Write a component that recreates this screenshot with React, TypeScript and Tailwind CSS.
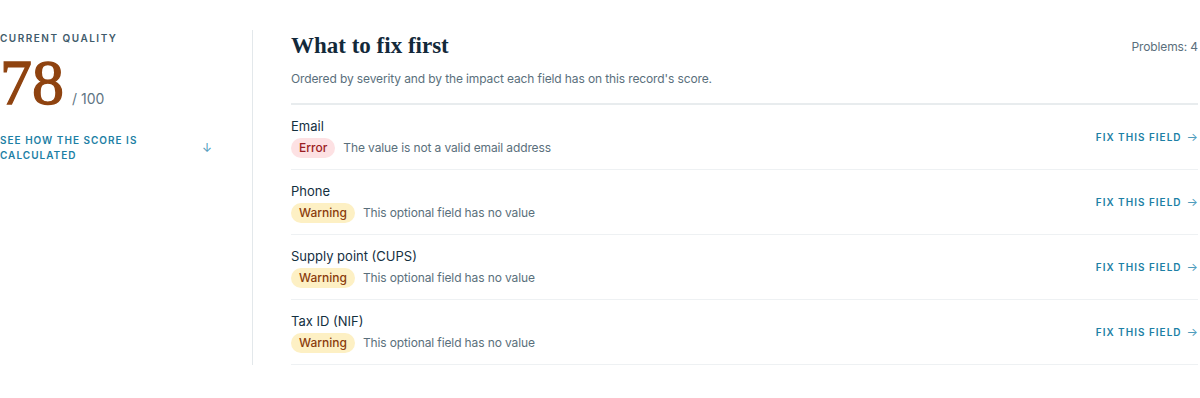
import React from 'react';

interface Problem {
  field: string;
  severity: 'error' | 'warning';
  message: string;
}

const problems: Problem[] = [
  { field: 'Email', severity: 'error', message: 'The value is not a valid email address' },
  { field: 'Phone', severity: 'warning', message: 'This optional field has no value' },
  { field: 'Supply point (CUPS)', severity: 'warning', message: 'This optional field has no value' },
  { field: 'Tax ID (NIF)', severity: 'warning', message: 'This optional field has no value' },
];

const serif = "font-['Liberation_Serif',Georgia,serif]";

export default function App() {
  return (
    <div className="min-h-[398px] bg-white font-['Inter',sans-serif] text-[#14303f]">
      <div className="flex pt-[30px]">
        {/* Score column */}
        <div className="w-[253px] shrink-0 border-r border-[#e3e8eb] pr-10">
          <div className="text-[10px] font-semibold uppercase leading-4 tracking-[0.15em] text-[#3f5b6b]">
            Current quality
          </div>
          <div className="mt-[5px] flex items-baseline">
            <span className={`${serif} text-[64px] leading-none text-[#8f4310] [-webkit-text-stroke:1.3px_#8f4310]`}>78</span>
            <span className="ml-2 text-[14px] text-[#5f7584]">/ 100</span>
          </div>
          <button className="mt-[18px] flex w-full items-center justify-between text-left">
            <span className="max-w-[150px] text-[10px] font-semibold uppercase leading-[15px] tracking-[0.1em] text-[#1d7fa5]">
              See how the score is calculated
            </span>
            <span className="text-[12px] text-[#4d9bbb]">↓</span>
          </button>
        </div>

        {/* Problems list */}
        <div className="flex-1 pl-[38px] pr-[2px]">
          <div className="border-b-2 border-[#e8ecee] pb-[14px]">
            <div className="flex items-center justify-between">
              <h2 className={`${serif} text-[23px] font-bold leading-8 text-[#13293a]`}>What to fix first</h2>
              <span className="pt-[2px] text-[12px] tracking-[-0.01em] text-[#5a6f7c]">Problems: 4</span>
            </div>
            <p className="mt-[7px] text-[12px] leading-5 tracking-[-0.01em] text-[#5a6f7c]">
              Ordered by severity and by the impact each field has on this record's score.
            </p>
          </div>

          {problems.map((p) => (
            <div
              key={p.field}
              className="flex items-center justify-between border-b border-[#eef1f3] pt-[11px] pb-[11px]"
            >
              <div>
                <div className="text-[13px] leading-5 text-[#14303f]">{p.field}</div>
                <div className="mt-0.5 flex items-center gap-2">
                  <span
                    className={
                      p.severity === 'error'
                        ? 'flex h-5 items-center rounded-full bg-[#fde1e3] px-2 text-[12px] font-medium text-[#9b1c22]'
                        : 'flex h-5 items-center rounded-full bg-[#fdf0c4] px-2 text-[12px] font-medium text-[#8a3c0c]'
                    }
                  >
                    {p.severity === 'error' ? 'Error' : 'Warning'}
                  </span>
                  <span className="text-[12px] tracking-[-0.01em] text-[#5a6f7c]">{p.message}</span>
                </div>
              </div>
              <button className="flex items-center gap-[5px] text-[10px] font-semibold uppercase tracking-[0.1em] text-[#1d7fa5]">
                Fix this field
                <span className="text-[12px] font-normal tracking-normal text-[#4d9bbb]">→</span>
              </button>
            </div>
          ))}
        </div>
      </div>
    </div>
  );
}
